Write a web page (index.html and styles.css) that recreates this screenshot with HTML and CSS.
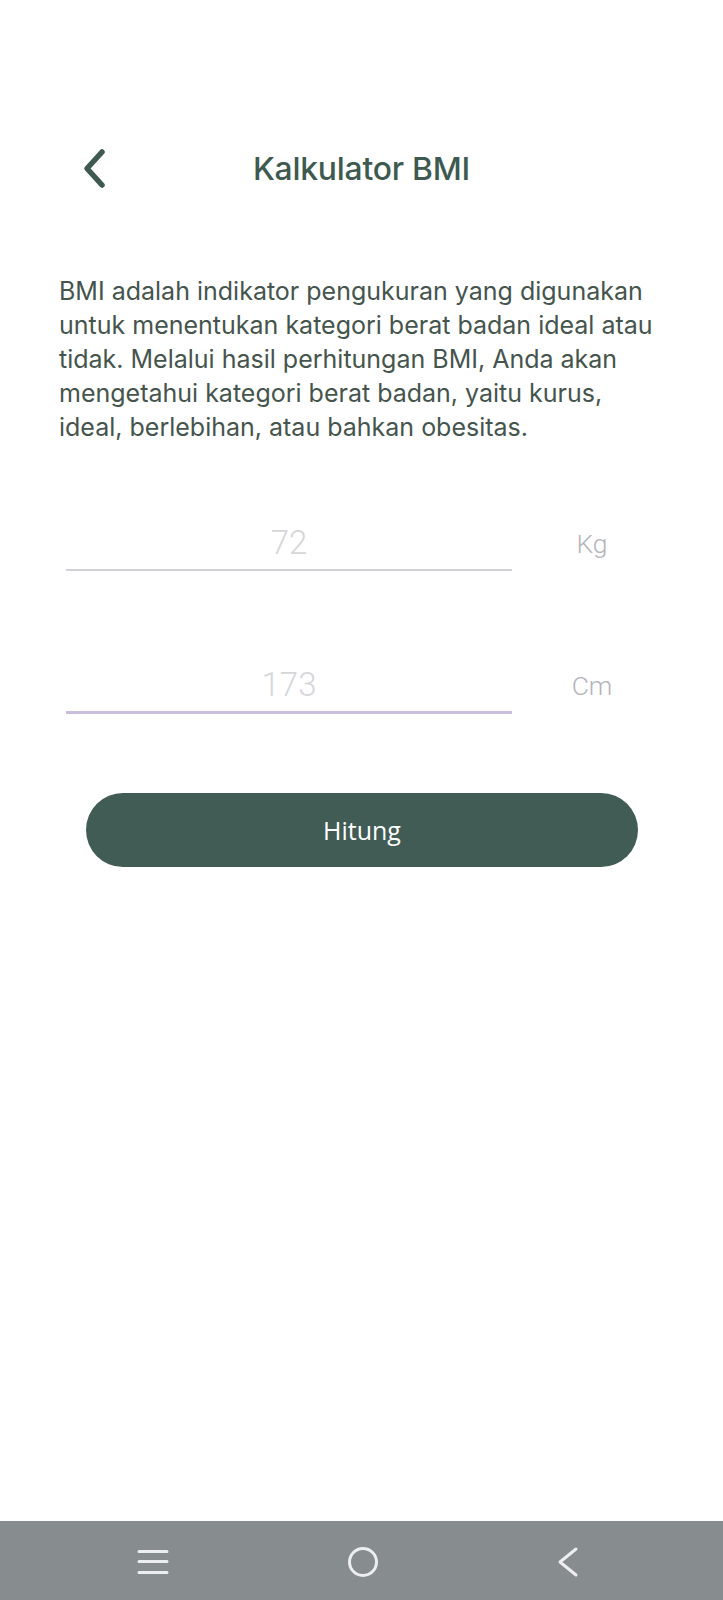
FILE: index.html
```html
<!DOCTYPE html>
<html lang="id">
<head>
<meta charset="utf-8">
<title>Kalkulator BMI</title>
<link rel="stylesheet" href="styles.css">
</head>
<body>
<div class="screen">
  <header class="topbar">
    <div class="back">
      <svg width="30" height="44" viewBox="0 0 30 44" aria-hidden="true">
        <path d="M22 6 L7 22.5 L22 39" fill="none" stroke="#3e5a50" stroke-width="5.5" stroke-linecap="round" stroke-linejoin="round"/>
      </svg>
    </div>
    <h1 class="title">Kalkulator BMI</h1>
    <div></div>
  </header>

  <p class="intro">BMI adalah indikator pengukuran yang digunakan untuk menentukan kategori berat badan ideal atau tidak. Melalui hasil perhitungan BMI, Anda akan mengetahui kategori berat badan, yaitu kurus, ideal, berlebihan, atau bahkan obesitas.</p>

  <div class="field field-weight">
    <div class="input">72</div>
    <div class="unit">Kg</div>
  </div>

  <div class="field field-height">
    <div class="input input-active">173</div>
    <div class="unit">Cm</div>
  </div>

  <button class="btn">Hitung</button>

  <nav class="navbar">
    <svg width="34" height="28" viewBox="0 0 34 28" aria-hidden="true">
      <path d="M3 3.5 H31 M3 13.5 H31 M3 24.5 H31" stroke="#eceeef" stroke-width="3" stroke-linecap="round"/>
    </svg>
    <svg width="34" height="34" viewBox="0 0 34 34" aria-hidden="true">
      <circle cx="17" cy="17" r="13.5" fill="none" stroke="#eceeef" stroke-width="3"/>
    </svg>
    <svg width="28" height="32" viewBox="0 0 28 32" aria-hidden="true">
      <path d="M22 3 L6 16 L22 29" fill="none" stroke="#eceeef" stroke-width="3" stroke-linecap="round" stroke-linejoin="round"/>
    </svg>
  </nav>
</div>
</body>
</html>
```

FILE: styles.css
```css
* {
  box-sizing: border-box;
}

html, body {
  margin: 0;
  padding: 0;
  background: #ffffff;
}

.screen {
  width: 723px;
  min-height: 1600px;
  display: flex;
  flex-direction: column;
  font-family: "Inter", "Liberation Sans", sans-serif;
}

.topbar {
  margin-top: 133px;
  height: 70px;
  display: grid;
  grid-template-columns: 1fr auto 1fr;
  align-items: center;
}

.back {
  padding-left: 80px;
  display: flex;
  align-items: center;
}

.back svg {
  display: block;
}

.title {
  margin: 0;
  font-size: 31.8px;
  font-weight: 500;
  color: #3e5a50;
  letter-spacing: -0.2px;
}

.intro {
  margin: 71px 0 0 59px;
  width: 604px;
  font-size: 25px;
  line-height: 34px;
  color: #45544d;
  font-weight: 400;
}

.field {
  margin-left: 66px;
  display: grid;
  grid-template-columns: 446px 160px;
  align-items: start;
}

.field-weight {
  margin-top: 77px;
}

.field-height {
  margin-top: 92px;
}

.input {
  font-family: "Roboto", "Liberation Sans", sans-serif;
  font-weight: 300;
  font-size: 33px;
  line-height: 44px;
  text-align: center;
  color: #d6d6da;
  padding-bottom: 4px;
  border-bottom: 2px solid #d3d1d8;
}

.input-active {
  border-bottom: 3px solid #c9bfdd;
}

.unit {
  font-family: "Roboto", "Liberation Sans", sans-serif;
  font-weight: 300;
  font-size: 26.5px;
  line-height: 44px;
  padding-top: 1px;
  text-align: center;
  color: #b4b4ba;
}

.btn {
  margin: 79px 0 0 86px;
  width: 552px;
  height: 74px;
  border: none;
  border-radius: 37px;
  background: #415c54;
  color: #ffffff;
  font-family: "Open Sans", "Liberation Sans", sans-serif;
  font-size: 25px;
  padding: 0;
}

.navbar {
  margin-top: auto;
  height: 79px;
  background: #878c8f;
  display: flex;
  align-items: center;
  padding-top: 2px;
}

.navbar svg {
  display: block;
}

.navbar svg:nth-child(1) {
  margin-left: 136px;
}

.navbar svg:nth-child(2) {
  margin-left: 176px;
}

.navbar svg:nth-child(3) {
  margin-left: 174px;
}
```
